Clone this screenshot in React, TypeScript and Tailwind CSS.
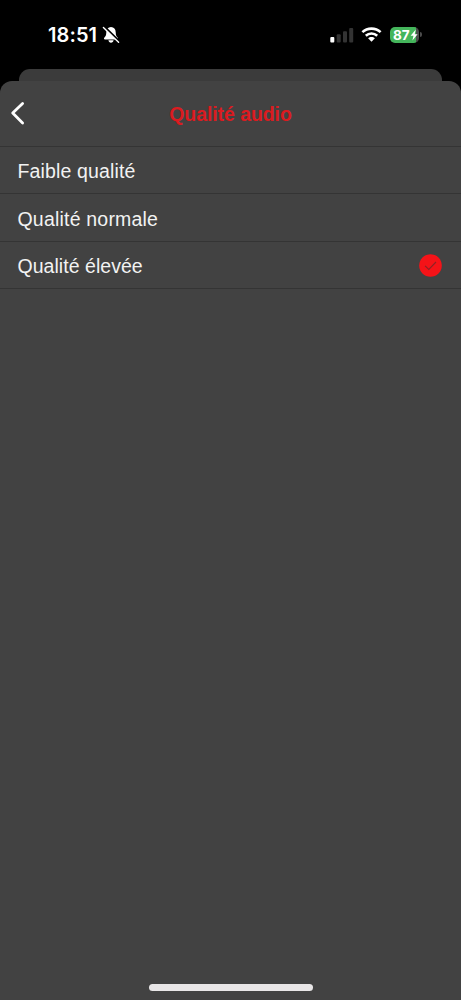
const qualities = [
  { label: 'Faible qualité', selected: false, text: 'tracking-[0.15px]', row: 'h-[47px]' },
  { label: 'Qualité normale', selected: false, text: 'tracking-[0.2px]', row: 'h-[48px]' },
  { label: 'Qualité élevée', selected: true, text: 'tracking-[0.04px]', row: 'h-[47px]' },
];

function SilentBell() {
  return (
    <svg className="ml-[3px] h-[18px] w-[18px]" viewBox="0 0 18 18" fill="none">
      <path
        d="M9 1.1C6 1.1 4.4 3.3 4.3 6.2C4.2 9.4 3.8 10 2.4 11.5C1.6 12.5 1.9 13.4 3 13.4H15C16.1 13.4 16.4 12.5 15.6 11.5C14.2 10 13.8 9.4 13.7 6.2C13.6 3.3 12 1.1 9 1.1ZM6.4 14.3C6.7 15.8 7.6 16.8 9 16.8S11.3 15.8 11.6 14.3Z"
        fill="#fff"
      />
      <path d="M2.2 0.7L17.4 15.5" stroke="#000" strokeWidth="2.4" />
      <path d="M1.4 1.4L16.6 16.2" stroke="#fff" strokeWidth="1.4" strokeLinecap="round" />
    </svg>
  );
}

function StatusBar() {
  return (
    <div className="flex h-[69px] items-start justify-between pl-[48px] pr-[39px] pt-[24px] text-white">
      <div className="flex h-[21px] items-center">
        <span className="w-[51px] pt-px font-['Inter',sans-serif] text-[20px] font-semibold leading-[21px] tracking-[0.1px]">18:51</span>
        <SilentBell />
      </div>
      <div className="flex h-[21px] items-center">
        <svg className="h-[16px] w-[24px]" viewBox="0 0 24 16">
          <rect x="0.3" y="10" width="4" height="5.5" rx="1" fill="#fff" />
          <rect x="6.7" y="7.2" width="4" height="8.3" rx="1" fill="#333" />
          <rect x="13" y="4.2" width="4" height="11.3" rx="1" fill="#333" />
          <rect x="19.2" y="1" width="4" height="14.5" rx="1" fill="#333" />
        </svg>
        <svg className="ml-[7px] h-[15px] w-[21px]" viewBox="0 0 21 15" fill="none" stroke="#fff" strokeWidth="2.6">
          <path d="M1.4 5.1C6.4 0.4 14.6 0.4 19.6 5.1" />
          <path d="M4.8 8.7C8 5.8 13 5.8 16.2 8.7" />
          <path d="M7.1 11.3C9 9.5 12 9.5 13.9 11.3L10.5 14.7Z" fill="#fff" stroke="none" />
        </svg>
        <div className="ml-[8px] flex items-center">
          <div className="flex h-[16px] w-[29px] items-center rounded-[5px] bg-[linear-gradient(90deg,#44b55b_88%,#4b4b4b_88%)] pl-[3px]">
            <span className="font-['Inter',sans-serif] text-[13.5px] font-bold leading-[16px]">87</span>
            <svg className="h-[12px] w-[8px] shrink-0" viewBox="0 0 8 12">
              <path d="M5.8 0.4L0.6 6.8H3.5L2.4 11.6L7.6 5.2H4.7Z" fill="#fff" />
            </svg>
          </div>
          <div className="ml-[1px] h-[5px] w-[2px] rounded-r-full bg-[#4b4b4b]" />
        </div>
      </div>
    </div>
  );
}

export default function App() {
  return (
    <div className="flex h-[1000px] w-[461px] flex-col overflow-hidden bg-black font-['Liberation_Sans',Arial,sans-serif]">
      <StatusBar />
      <div className="mx-[19px] h-[12px] shrink-0 rounded-t-[11px] bg-[#3b3b3b]" />
      <main className="flex min-h-0 flex-1 flex-col rounded-t-[12px] bg-[#424242]">
        <header className="grid h-[66px] shrink-0 grid-cols-[40px_1fr_40px] items-center border-b border-[#343434]">
          <button aria-label="Retour" className="pb-px pl-[10px]">
            <svg className="h-[24px] w-[16px]" viewBox="0 0 16 24" fill="none">
              <path d="M12.6 2.5L2.7 12.1L12.6 21.9" stroke="#fff" strokeWidth="2.8" strokeLinecap="round" strokeLinejoin="round" />
            </svg>
          </button>
          <h1 className="text-center text-[19.5px] font-bold leading-[24px] tracking-[-0.08px] text-[#db1b20]">Qualité audio</h1>
        </header>
        <ul>
          {qualities.map((q) => (
            <li key={q.label} className={`flex items-center justify-between border-b border-[#343434] pl-[17.5px] pr-[19px] ${q.row}`}>
              <span className={`pt-[2px] text-[19.5px] leading-[24px] text-[#f2f2f2] ${q.text}`}>{q.label}</span>
              {q.selected && (
                <svg className="h-[23px] w-[23px]" viewBox="0 0 23 23" fill="none">
                  <circle cx="11.5" cy="11.5" r="11.3" fill="#f51318" />
                  <path d="M6.1 11.8L9.8 15.4L17 8" stroke="#8e2326" strokeWidth="1.1" />
                </svg>
              )}
            </li>
          ))}
        </ul>
        <div className="mx-auto mb-[9px] mt-auto h-[7px] w-[164px] rounded-full bg-[#e8e6e7]" />
      </main>
    </div>
  );
}
